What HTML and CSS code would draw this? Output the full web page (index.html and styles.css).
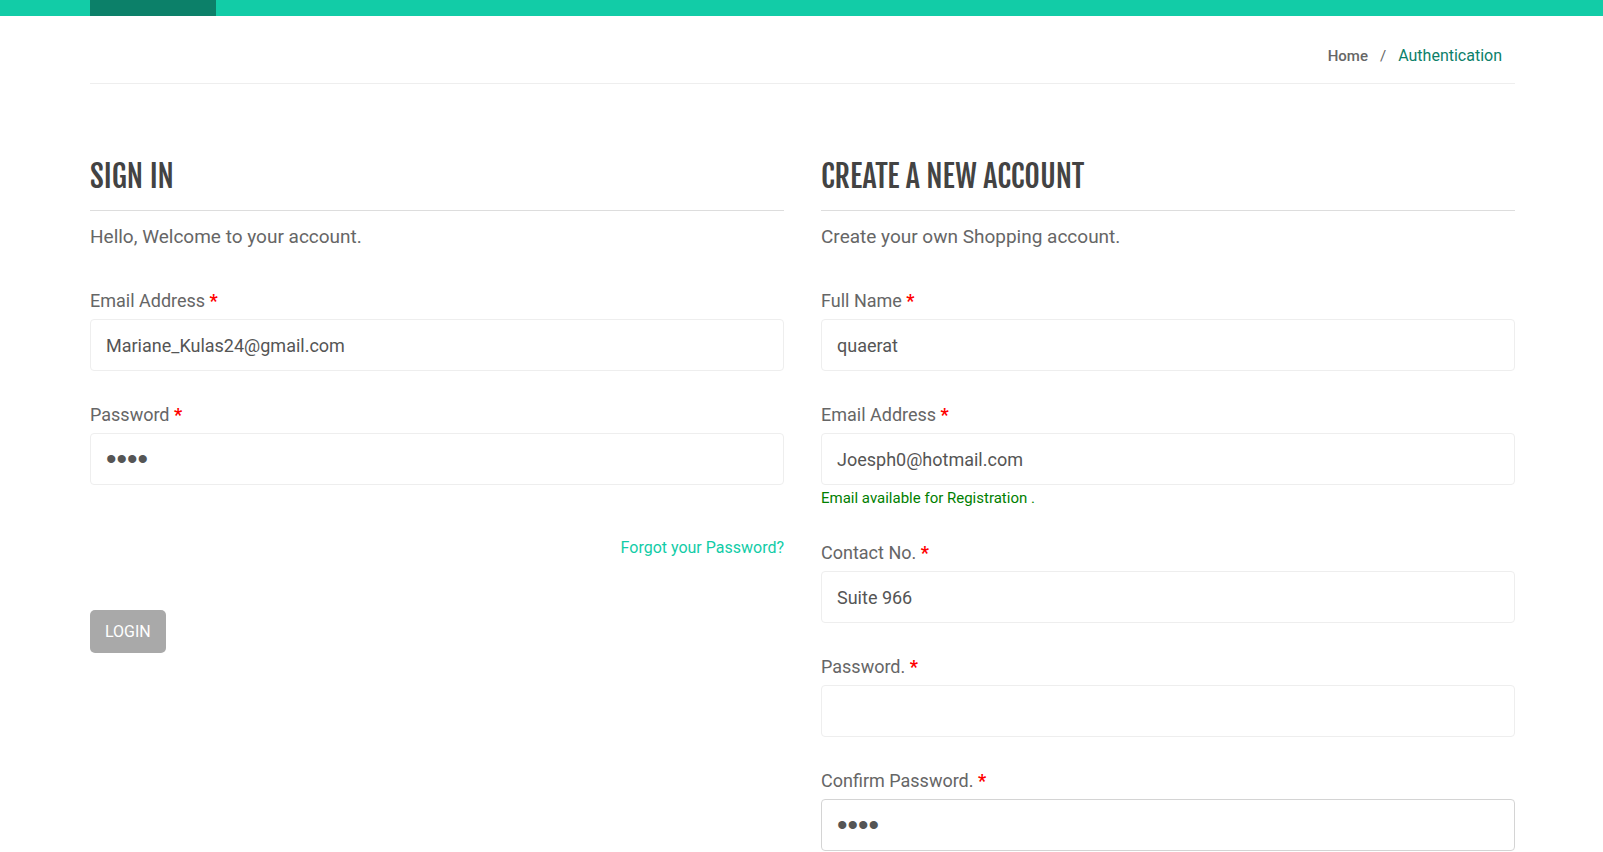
FILE: index.html
```html
<!DOCTYPE html>
<html lang="en">
<head>
<meta charset="utf-8">
<meta name="viewport" content="width=device-width, initial-scale=1">
<title>Authentication</title>
<link rel="stylesheet" href="styles.css">
</head>
<body>
<header class="navbar">
  <div class="navbar-active"></div>
</header>
<div class="container">
  <nav class="breadcrumb" aria-label="Breadcrumb">
    <a class="breadcrumb-home" href="#">Home</a>
    <span class="breadcrumb-sep">/</span>
    <span class="breadcrumb-current">Authentication</span>
  </nav>
  <main class="columns">
    <section>
      <h2 class="title">SIGN IN</h2>
      <p class="intro">Hello, Welcome to your account.</p>
      <form>
        <div class="field">
          <label class="label" for="login-email">Email Address <span class="required">*</span></label>
          <input class="input" id="login-email" type="email" value="Mariane_Kulas24@gmail.com">
        </div>
        <div class="field">
          <label class="label" for="login-password">Password <span class="required">*</span></label>
          <input class="input input-password" id="login-password" type="password" value="pass">
        </div>
        <div class="forgot"><a class="forgot-link" href="#">Forgot your Password?</a></div>
        <button class="button" type="button">LOGIN</button>
      </form>
    </section>
    <section>
      <h2 class="title">CREATE A NEW ACCOUNT</h2>
      <p class="intro">Create your own Shopping account.</p>
      <form>
        <div class="field">
          <label class="label" for="name">Full Name <span class="required">*</span></label>
          <input class="input" id="name" type="text" value="quaerat">
        </div>
        <div class="field">
          <label class="label" for="email">Email Address <span class="required">*</span></label>
          <input class="input" id="email" type="email" value="Joesph0@hotmail.com">
          <div class="status">Email available for Registration .</div>
        </div>
        <div class="field">
          <label class="label" for="contact">Contact No. <span class="required">*</span></label>
          <input class="input" id="contact" type="text" value="Suite 966">
        </div>
        <div class="field">
          <label class="label" for="password">Password. <span class="required">*</span></label>
          <input class="input input-password" id="password" type="password">
        </div>
        <div class="field field-last">
          <label class="label" for="confirm">Confirm Password. <span class="required">*</span></label>
          <input class="input input-password input-active" id="confirm" type="password" value="pass">
        </div>
      </form>
    </section>
  </main>
</div>
</body>
</html>
```

FILE: styles.css
```css
* {
  box-sizing: border-box;
}

body {
  margin: 0;
  background: #fff;
  color: #666;
  font-family: Roboto, "Liberation Sans", sans-serif;
  font-size: 18px;
}

.navbar {
  padding: 0 88px 0 90px;
  background: #12cca7;
}

.navbar-active {
  width: 126px;
  height: 16px;
  background: #0c8069;
}

.container {
  padding: 0 88px 0 90px;
}

.breadcrumb {
  display: flex;
  align-items: center;
  justify-content: flex-end;
  gap: 12px;
  padding: 28px 13px 15px;
  border-bottom: 1px solid #eee;
  font-size: 16px;
  line-height: 24px;
}

.breadcrumb-home {
  color: #666;
  font-size: 15px;
  font-weight: 500;
  text-decoration: none;
}

.breadcrumb-sep {
  font-size: 15px;
}

.breadcrumb-current {
  color: #0c8069;
}

.columns {
  display: grid;
  grid-template-columns: 1fr 1fr;
  gap: 37px;
  padding-top: 66px;
}

.title {
  margin: 0;
  padding: 10px 0 16px;
  border-bottom: 1px solid #ddd;
  color: #434343;
  font-family: "Fjalla One", "Roboto Condensed", "Liberation Sans Narrow", Roboto, sans-serif;
  font-size: 30px;
  font-weight: 400;
  line-height: 34px;
}

.intro {
  margin: 0 0 37px;
  padding-top: 12px;
  font-size: 19px;
  line-height: 28px;
}

.field {
  margin-bottom: 31px;
}

.field-last {
  margin-bottom: 0;
}

.label {
  display: block;
  padding-bottom: 5px;
  line-height: 26px;
}

.required {
  color: red;
  font-weight: 700;
}

.input {
  display: block;
  width: 100%;
  height: 52px;
  padding: 0 15px;
  border: 1px solid #eee;
  border-radius: 4px;
  outline: 0;
  background: #fff;
  color: #555;
  font: inherit;
}

.input-password {
  font-family: "Liberation Sans", sans-serif;
  font-size: 30px;
}

.input-active {
  border-color: #d4d4d4;
}

.status {
  padding-top: 2px;
  color: green;
  font-size: 15px;
  line-height: 22px;
}

.forgot {
  padding: 19px 0 50px;
  font-size: 16px;
  line-height: 25px;
  text-align: right;
}

.forgot-link {
  color: #12cca7;
  text-decoration: none;
}

.button {
  padding: 10px 15px;
  border: 0;
  border-radius: 5px;
  background: #a9a9a9;
  color: #fff;
  font: inherit;
  font-size: 16px;
  line-height: 23px;
}
```
